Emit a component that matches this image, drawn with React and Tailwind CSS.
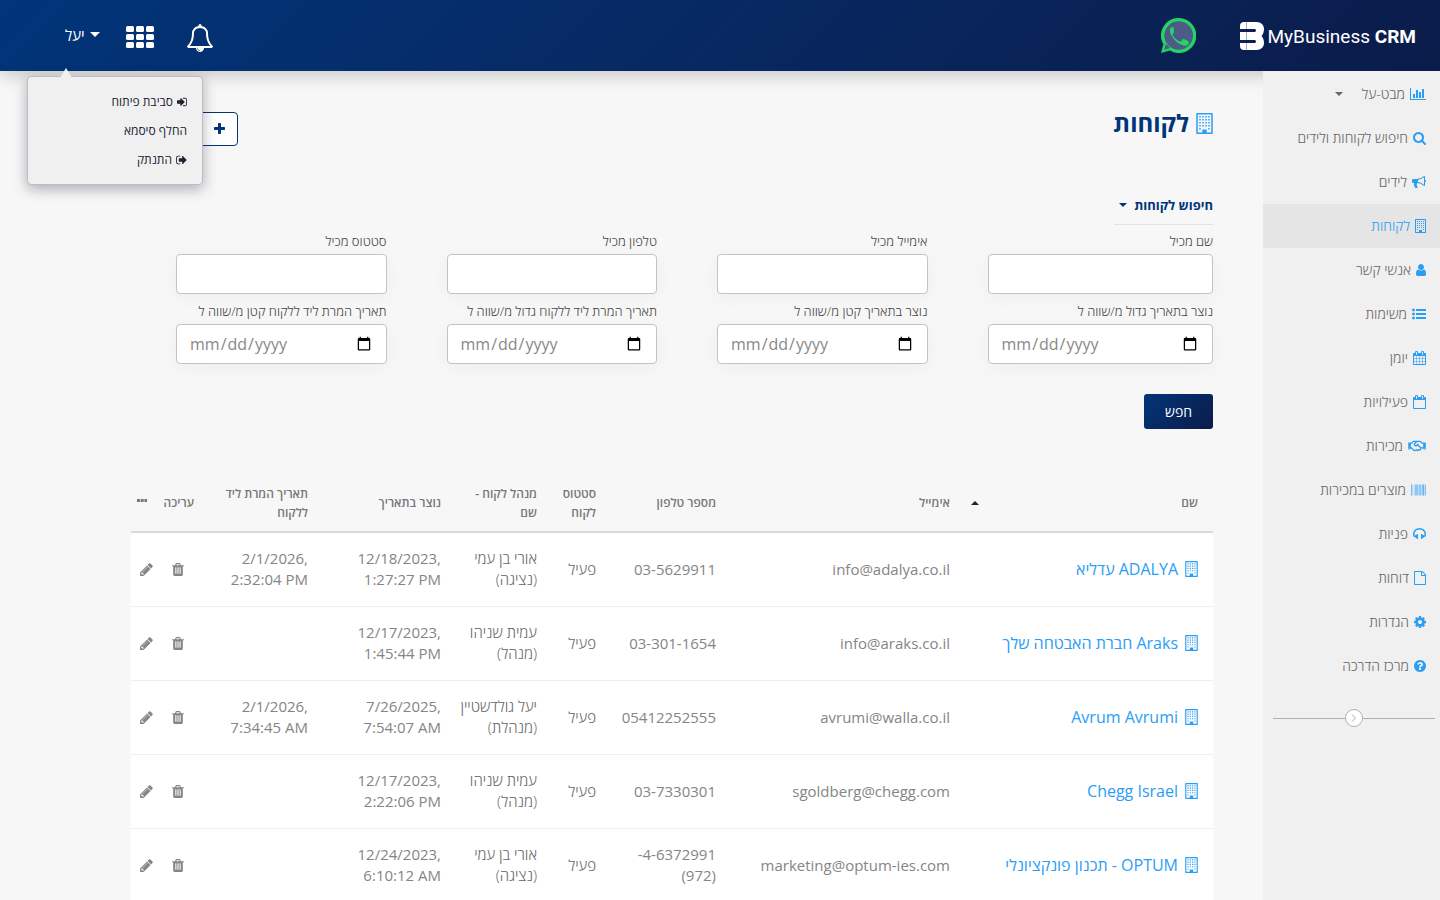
import { FaRegHandshake } from 'react-icons/fa';

const win = (x, y) => `M${x} ${y}h128v128h-128z`;
const buildingWindows = [256, 512, 768, 1024, 1280]
    .flatMap((y) => [256, 512, 768, 1024].filter((x) => y < 1280 || x === 256 || x === 1024).map((x) => win(x, y)))
    .join('');

const bars = [0, 94, 221, 378, 504, 660, 785, 942, 1036, 1162, 1320, 1414, 1540, 1697, 1824];
const barWidths = [63, 32, 31, 31, 62, 63, 62, 31, 63, 63, 31, 63, 94, 31, 63];

// [x offset, width, path] on a 1792 unit em
const icons = {
    chart: [0, 2048, 'M640 896v512h-256v-512h256zm384-512v1024h-256v-1024h256zm1024 1152v128h-2048v-1536h128v1408h1920zm-640-896v768h-256v-768h256zm384-384v1152h-256v-1152h256z'],
    search: [64, 1664, 'M1216 832q0-185-131.5-316.5t-316.5-131.5-316.5 131.5-131.5 316.5 131.5 316.5 316.5 131.5 316.5-131.5 131.5-316.5zm512 832q0 52-38 90t-90 38q-54 0-90-38l-343-342q-179 124-399 124-143 0-273.5-55.5t-225-150-150-225-55.5-273.5 55.5-273.5 150-225 225-150 273.5-55.5 273.5 55.5 225 150 150 225 55.5 273.5q0 220-124 399l343 343q37 37 37 90z'],
    bullhorn: [0, 1792, 'M1664 640q53 0 90.5 37.5t37.5 90.5-37.5 90.5-90.5 37.5v384q0 52-38 90t-90 38q-417-347-812-380-58 19-91 66t-31 100.5 40 92.5q-20 33-23 65.5t6 58 33.5 55 48 50 61.5 50.5q-29 58-111.5 83t-168.5 11.5-132-55.5q-7-23-29.5-87.5t-32-94.5-23-89-15-101 3.5-98 22-110.5h-122q-66 0-113-47t-47-113v-192q0-66 47-113t113-47h480q435 0 896-384 52 0 90 38t38 90v384zm-128 604v-954q-394 302-768 343v270q377 42 768 341z'],
    building: [0, 1408, 'M64 0h1280q26 0 45 19t19 45v1664q0 26-19 45t-45 19h-1280q-26 0-45-19t-19-45v-1664q0-26 19-45t45-19zm832 1664h384v-1536h-1152v1536h384v-224q0-13 9.5-22.5t22.5-9.5h320q13 0 22.5 9.5t9.5 22.5v224z' + buildingWindows],
    user: [256, 1280, 'M1536 1399q0 109-62.5 187t-150.5 78h-854q-88 0-150.5-78t-62.5-187q0-85 8.5-160.5t31.5-152 58.5-131 94-89 134.5-34.5q131 128 313 128t313-128q76 0 134.5 34.5t94 89 58.5 131 31.5 152 8.5 160.5zm-256-887q0 159-112.5 271.5t-271.5 112.5-271.5-112.5-112.5-271.5 112.5-271.5 271.5-112.5 271.5 112.5 112.5 271.5z'],
    list: [0, 1792, 'M384 1408q0 80-56 136t-136 56-136-56-56-136 56-136 136-56 136 56 56 136zm0-512q0 80-56 136t-136 56-136-56-56-136 56-136 136-56 136 56 56 136zm1408 416v192q0 13-9.5 22.5t-22.5 9.5h-1216q-13 0-22.5-9.5t-9.5-22.5v-192q0-13 9.5-22.5t22.5-9.5h1216q13 0 22.5 9.5t9.5 22.5zm-1408-928q0 80-56 136t-136 56-136-56-56-136 56-136 136-56 136 56 56 136zm1408 416v192q0 13-9.5 22.5t-22.5 9.5h-1216q-13 0-22.5-9.5t-9.5-22.5v-192q0-13 9.5-22.5t22.5-9.5h1216q13 0 22.5 9.5t9.5 22.5zm0-512v192q0 13-9.5 22.5t-22.5 9.5h-1216q-13 0-22.5-9.5t-9.5-22.5v-192q0-13 9.5-22.5t22.5-9.5h1216q13 0 22.5 9.5t9.5 22.5z'],
    calendar: [64, 1664, 'M192 1664h288v-288h-288v288zm352 0h320v-288h-320v288zm-352-352h288v-320h-288v320zm352 0h320v-320h-320v320zm-352-384h288v-288h-288v288zm736 736h320v-288h-320v288zm-384-736h320v-288h-320v288zm768 736h288v-288h-288v288zm-384-352h320v-320h-320v320zm-352-864v-288q0-13-9.5-22.5t-22.5-9.5h-64q-13 0-22.5 9.5t-9.5 22.5v288q0 13 9.5 22.5t22.5 9.5h64q13 0 22.5-9.5t9.5-22.5zm736 864h288v-320h-288v320zm-384-384h320v-288h-320v288zm384 0h288v-288h-288v288zm32-480v-288q0-13-9.5-22.5t-22.5-9.5h-64q-13 0-22.5 9.5t-9.5 22.5v288q0 13 9.5 22.5t22.5 9.5h64q13 0 22.5-9.5t9.5-22.5zm384-64v1280q0 52-38 90t-90 38h-1408q-52 0-90-38t-38-90v-1280q0-52 38-90t90-38h128v-96q0-66 47-113t113-47h64q66 0 113 47t47 113v96h384v-96q0-66 47-113t113-47h64q66 0 113 47t47 113v96h128q52 0 90 38t38 90z'],
    calendarEmpty: [64, 1664, 'M192 1664h1408v-1024h-1408v1024zm384-1216v-288q0-13-9.5-22.5t-22.5-9.5h-64q-13 0-22.5 9.5t-9.5 22.5v288q0 13 9.5 22.5t22.5 9.5h64q13 0 22.5-9.5t9.5-22.5zm768 0v-288q0-13-9.5-22.5t-22.5-9.5h-64q-13 0-22.5 9.5t-9.5 22.5v288q0 13 9.5 22.5t22.5 9.5h64q13 0 22.5-9.5t9.5-22.5zm384-64v1280q0 52-38 90t-90 38h-1408q-52 0-90-38t-38-90v-1280q0-52 38-90t90-38h128v-96q0-66 47-113t113-47h64q66 0 113 47t47 113v96h384v-96q0-66 47-113t113-47h64q66 0 113 47t47 113v96h128q52 0 90 38t38 90z'],
    barcode: [0, 1887, bars.map((x, i) => `M${x} 192h${barWidths[i]}v1408h-${barWidths[i]}z`).join('')],
    headphones: [64, 1664, 'M1728 886q0 166-60 314l-20 49-185 33q-22 83-90.5 136.5t-156.5 53.5v32q0 14-9 23t-23 9h-64q-14 0-23-9t-9-23v-576q0-14 9-23t23-9h64q14 0 23 9t9 23v32q71 0 130 35.5t93 95.5l68-12q29-95 29-193 0-148-88-279t-236.5-209-315.5-78-315.5 78-236.5 209-88 279q0 98 29 193l68 12q34-60 93-95.5t130-35.5v-32q0-14 9-23t23-9h64q14 0 23 9t9 23v576q0 14-9 23t-23 9h-64q-14 0-23-9t-9-23v-32q-88 0-156.5-53.5t-90.5-136.5l-185-33-20-49q-60-148-60-314 0-151 67-291t179-242.5 266-163.5 320-61 320 61 266 163.5 179 242.5 67 291z'],
    file: [128, 1536, 'M1596 380q28 28 48 76t20 88v1152q0 40-28 68t-68 28h-1344q-40 0-68-28t-28-68v-1600q0-40 28-68t68-28h896q40 0 88 20t76 48zm-444-244v376h376q-10-29-22-41l-313-313q-12-12-41-22zm384 1528v-1024h-416q-40 0-68-28t-28-68v-416h-768v1536h1280z'],
    cog: [128, 1536, 'M1152 896q0-106-75-181t-181-75-181 75-75 181 75 181 181 75 181-75 75-181zm512-109v222q0 12-8 23t-20 13l-185 28q-19 54-39 91 35 50 107 138 10 12 10 25t-9 23q-27 37-99 108t-94 71q-12 0-26-9l-138-108q-44 23-91 38-16 136-29 186-7 28-36 28h-222q-14 0-24.5-8.5t-11.5-21.5l-28-184q-49-16-90-37l-141 107q-10 9-25 9-14 0-25-11-126-114-165-168-7-10-7-23 0-12 8-23 15-21 51-66.5t54-70.5q-27-50-41-99l-183-27q-13-2-21-12.5t-8-23.5v-222q0-12 8-23t19-13l186-28q14-46 39-92-40-57-107-138-10-12-10-24 0-10 9-23 26-36 98.5-107.5t94.5-71.5q13 0 26 10l138 107q44-23 91-38 16-136 29-186 7-28 36-28h222q14 0 24.5 8.5t11.5 21.5l28 184q49 16 90 37l142-107q9-9 24-9 13 0 25 10 129 119 165 170 7 8 7 22 0 12-8 23-15 21-51 66.5t-54 70.5q26 50 41 98l183 28q13 2 21 12.5t8 23.5z'],
    question: [128, 1536, 'M1024 1376v-192q0-14-9-23t-23-9h-192q-14 0-23 9t-9 23v192q0 14 9 23t23 9h192q14 0 23-9t9-23zm256-672q0-88-55.5-163t-138.5-116-170-41q-243 0-371 213-15 24 8 42l132 100q7 6 19 6 16 0 25-12 53-68 86-92 34-24 86-24 48 0 85.5 26t37.5 59q0 38-20 61t-68 45q-63 28-115.5 86.5t-52.5 125.5v36q0 14 9 23t23 9h192q14 0 23-9t9-23q0-19 21.5-49.5t54.5-49.5q32-18 49-28.5t46-35 44.5-48 28-60.5 12.5-81zm384 192q0 209-103 385.5t-279.5 279.5-385.5 103-385.5-103-279.5-279.5-103-385.5 103-385.5 279.5-279.5 385.5-103 385.5 103 279.5 279.5 103 385.5z'],
    trash: [192, 1408, 'M704 1376v-704q0-14-9-23t-23-9h-64q-14 0-23 9t-9 23v704q0 14 9 23t23 9h64q14 0 23-9t9-23zm256 0v-704q0-14-9-23t-23-9h-64q-14 0-23 9t-9 23v704q0 14 9 23t23 9h64q14 0 23-9t9-23zm256 0v-704q0-14-9-23t-23-9h-64q-14 0-23 9t-9 23v704q0 14 9 23t23 9h64q14 0 23-9t9-23zm-544-992h448l-48-117q-7-9-17-11h-317q-10 2-17 11zm928 32v64q0 14-9 23t-23 9h-96v948q0 83-47 143.5t-113 60.5h-832q-66 0-113-58.5t-47-141.5v-952h-96q-14 0-23-9t-9-23v-64q0-14 9-23t23-9h309l70-167q15-37 54-63t79-26h320q40 0 79 26t54 63l70 167h309q14 0 23 9t9 23z'],
    pencil: [128, 1536, 'M491 1536l91-91-235-235-91 91v107h128v128h107zm523-928q0-22-22-22-10 0-17 7l-542 542q-7 7-7 17 0 22 22 22 10 0 17-7l542-542q7-7 7-17zm-54-192l416 416-832 832h-416v-416zm683 96q0 53-37 90l-166 166-416-416 166-165q36-38 90-38 53 0 91 38l235 234q37 39 37 91z'],
    plus: [192, 1408, 'M1600 736v192q0 40-28 68t-68 28h-416v416q0 40-28 68t-68 28h-192q-40 0-68-28t-28-68v-416h-416q-40 0-68-28t-28-68v-192q0-40 28-68t68-28h416v-416q0-40 28-68t68-28h192q40 0 68 28t28 68v416h416q40 0 68 28t28 68z'],
    signIn: [128, 1536, 'M1312 896q0 26-19 45l-544 544q-19 19-45 19t-45-19-19-45v-288h-448q-26 0-45-19t-19-45v-384q0-26 19-45t45-19h448v-288q0-26 19-45t45-19 45 19l544 544q19 19 19 45zm352-352v704q0 119-84.5 203.5t-203.5 84.5h-320q-13 0-22.5-9.5t-9.5-22.5q0-4-1-20t-.5-26.5 3-23.5 10-19.5 20.5-6.5h320q66 0 113-47t47-113v-704q0-66-47-113t-113-47h-312l-11.5-1-11.5-3-8-5.5-7-9-2-13.5q0-4-1-20t-.5-26.5 3-23.5 10-19.5 20.5-6.5h320q119 0 203.5 84.5t84.5 203.5z'],
    signOut: [64, 1600, 'M704 1440q0 4 1 20t.5 26.5-3 23.5-10 19.5-20.5 6.5h-320q-119 0-203.5-84.5t-84.5-203.5v-704q0-119 84.5-203.5t203.5-84.5h320q13 0 22.5 9.5t9.5 22.5q0 4 1 20t.5 26.5-3 23.5-10 19.5-20.5 6.5h-320q-66 0-113 47t-47 113v704q0 66 47 113t113 47h312l11.5 1 11.5 3 8 5.5 7 9 2 13.5zm928-544q0 26-19 45l-544 544q-19 19-45 19t-45-19-19-45v-288h-448q-26 0-45-19t-19-45v-384q0-26 19-45t45-19h448v-288q0-26 19-45t45-19 45 19l544 544q19 19 19 45z'],
    bell: [64, 1664, 'M912 1696q0-16-16-16-59 0-101.5-42.5t-42.5-101.5q0-16-16-16t-16 16q0 73 51.5 124.5t124.5 51.5q16 0 16-16zm-666-288h1300q-266-300-266-832 0-51-24-105t-69-103-121.5-80.5-169.5-31.5-169.5 31.5-121.5 80.5-69 103-24 105q0 532 -266 832zm1482 0q0 52-38 90t-90 38h-448q0 106-75 181t-181 75-181-75-75-181h-448q-52 0-90-38t-38-90q50-42 91-88t85-119.5 74.5-158.5 50-206 19.5-260q0-152 117-282.5t307-158.5q-8-19-8-39 0-40 28-68t68-28 68 28 28 68q0 20-8 39 190 28 307 158.5t117 282.5q0 139 19.5 260t50 206 74.5 158.5 85 119.5 91 88z'],
};

function Icon({ name, size = 14, className = '' }) {
    const [x, width, path] = icons[name];
    return (
        <svg
            className={`shrink-0 ${className}`}
            width={Math.round((width / 1792) * size)}
            height={size}
            viewBox={`${x} 0 ${width} 1792`}
            fill="currentColor"
            fillRule="evenodd"
            aria-hidden="true"
        >
            <path d={path} />
        </svg>
    );
}

function Caret({ className = '', up = false }) {
    return (
        <svg className={className} viewBox="0 0 8 4" fill="currentColor" aria-hidden="true">
            <path d={up ? 'M0 4L4 0L8 4z' : 'M0 0h8L4 4z'} />
        </svg>
    );
}

function Logo() {
    return (
        <a href="#" dir="ltr" className="flex items-center gap-1 text-white">
            <svg width="24" height="28" viewBox="0 0 24 28" fill="none" aria-hidden="true">
                <path d="M4 0h12.500c4.500 0 7.500 3 7.500 7 0 3-1 5.500-2.500 7 1.500 1.500 2.500 4 2.500 7 0 4-3 7-7.500 7H4c-2.500 0-4-1.500-4-4V4c0-2.500 1.500-4 4-4z" fill="#fff" />
                <path d="M0 8.500h14M0 19.500h14" stroke="#0a2050" strokeWidth="3" />
                <path d="M14 7c1.500 0 2 .7 2 1.500s-.5 1.500-2 1.500zM14 18c1.500 0 2 .7 2 1.500s-.5 1.500-2 1.500z" fill="#0a2050" />
                <path d="M6.500 0v28" stroke="#0a2050" strokeOpacity=".35" />
            </svg>
            <span className="pt-[2px] font-[Roboto] text-[19px] leading-7 whitespace-nowrap">
                MyBusiness <b className="font-bold">CRM</b>
            </span>
        </a>
    );
}

const userMenu = [
    { label: 'סביבת פיתוח', icon: 'signIn' },
    { label: 'החלף סיסמא' },
    { label: 'התנתק', icon: 'signOut' },
];

function Header() {
    return (
        <header className="relative z-10 flex h-[71px] items-center justify-between bg-linear-135 from-[#00357a] to-[#0a1c4a] ps-6 pe-[65px] shadow-[0_4px_16px_rgba(0,0,0,0.2)]">
            <div className="flex items-center gap-11">
                <Logo />
                <a href="#" aria-label="WhatsApp">
                    <svg width="35" height="35" viewBox="0 0 35 35" aria-hidden="true">
                        <path d="M17.500 0A17.500 17.500 0 0 0 2.400 26.300L0 35l9-2.400A17.500 17.500 0 1 0 17.500 0z" fill="#25d366" />
                        <circle cx="17.700" cy="17.500" r="14.300" fill="#4c5c86" />
                        <path d="M3.300 31.700l1.600-5.900 4.300 4.200z" fill="#4c5c86" />
                        <path d="M12.700 9.700c-.4-.9-.8-.8-1.200-.8-1 0-2.700 1-2.700 3.800 0 2.700 2 5.300 2.300 5.700.3.400 3.900 6.200 9.600 8.400 4.700 1.900 5.700.7 6.700-.9.500-.9.500-2.100.3-2.400-.2-.3-.6-.5-1.200-.8l-3.600-1.700c-.5-.2-.9-.3-1.200.3l-1.700 2.100c-.3.400-.6.400-1.100.1-.6-.3-2.300-.9-4.300-2.700-1.600-1.500-2.700-3.200-3-3.800-.3-.6 0-.8.300-1.100.9-1 1.300-1.700 1.100-2.300z" fill="#25d366" />
                    </svg>
                </a>
            </div>

            <div className="flex items-center text-white">
                <button type="button" aria-label="התראות" className="me-[33px] pt-1">
                    <Icon name="bell" size={28} />
                </button>
                <button type="button" aria-label="אפליקציות" className="me-[26px] pt-[2px]">
                    <svg width="28" height="22" viewBox="0 0 28 22" fill="currentColor" aria-hidden="true">
                        {[0, 8, 16].map((y) => [0, 10, 20].map((x) => <rect key={`${x}-${y}`} x={x} y={y} width="8" height="6" rx="1.500" />))}
                    </svg>
                </button>
                <button type="button" className="flex items-center gap-[5px] pb-[2px] text-[15px] leading-5">
                    <Caret className="h-[5px] w-[10px]" />
                    יעל
                </button>
            </div>

            {/* תפריט משתמש */}
            <nav className="absolute top-[76px] left-[27px] w-44 rounded border border-[#bdbdc2] bg-[#f0f0f0] px-[15px] pt-[10px] pb-[10px] text-[12px] leading-[29px] text-[#212132] shadow-[0_4px_14px_rgba(30,30,60,0.35)]">
                <svg className="absolute -top-[9px] left-8" width="12" height="10" viewBox="0 0 12 10" aria-hidden="true">
                    <path d="M0 10L6 0l6 10z" fill="#f0f0f0" />
                </svg>
                {userMenu.map((item) => (
                    <a key={item.label} href="#" className="flex items-center gap-1">
                        {item.icon && <Icon name={item.icon} size={12} />}
                        {item.label}
                    </a>
                ))}
            </nav>
        </header>
    );
}

const navItems = [
    { label: 'מבט-על', icon: 'chart', caret: true },
    { label: 'חיפוש לקוחות ולידים', icon: 'search' },
    { label: 'לידים', icon: 'bullhorn' },
    { label: 'לקוחות', icon: 'building', active: true },
    { label: 'אנשי קשר', icon: 'user' },
    { label: 'משימות', icon: 'list' },
    { label: 'יומן', icon: 'calendar' },
    { label: 'פעילויות', icon: 'calendarEmpty' },
    { label: 'מכירות', icon: 'handshake' },
    { label: 'מוצרים במכירות', icon: 'barcode' },
    { label: 'פניות', icon: 'headphones' },
    { label: 'דוחות', icon: 'file' },
    { label: 'הגדרות', icon: 'cog' },
    { label: 'מרכז הדרכה', icon: 'question' },
];

function Sidebar() {
    return (
        <aside className="relative z-20 w-[177px] shrink-0 bg-[#f0f0f0] pt-px">
            <nav>
                {navItems.map((item) => (
                    <a
                        key={item.label}
                        href="#"
                        className={`flex h-11 items-center gap-[5px] ps-[14px] text-[14px] font-light ${item.active ? 'bg-[#e5e5e5] text-[#2a9df4]' : 'text-[#666]'}`}
                    >
                        {item.icon === 'handshake'
                            ? <FaRegHandshake className="h-[14px] w-[18px] text-[#2a9df4]" />
                            : <Icon name={item.icon} className="text-[#2a9df4]" />}
                        <span className="pb-[2px]">{item.label}</span>
                        {item.caret && <Caret className="ms-[14px] h-1 w-2" />}
                    </a>
                ))}
            </nav>
            <div className="ms-[5px] me-[10px] mt-[21px] flex items-center">
                <span className="h-px flex-1 bg-[#b0b0aa]" />
                <button type="button" aria-label="כווץ תפריט" className="flex size-[18px] items-center justify-center rounded-full border border-[#b0b0aa] bg-white">
                    <svg width="6" height="8" viewBox="0 0 6 8" fill="none" stroke="#aaa" aria-hidden="true">
                        <path d="M1 .5L4.500 4L1 7.500" />
                    </svg>
                </button>
                <span className="h-px flex-1 bg-[#b0b0aa]" />
            </div>
        </aside>
    );
}

const fields = [
    { id: 'name', label: 'שם מכיל' },
    { id: 'email', label: 'אימייל מכיל' },
    { id: 'phone', label: 'טלפון מכיל' },
    { id: 'status', label: 'סטטוס מכיל' },
    { id: 'created-from', label: 'נוצר בתאריך גדול מ/שווה ל', date: true },
    { id: 'created-to', label: 'נוצר בתאריך קטן מ/שווה ל', date: true },
    { id: 'converted-from', label: 'תאריך המרת ליד ללקוח גדול מ/שווה ל', date: true },
    { id: 'converted-to', label: 'תאריך המרת ליד ללקוח קטן מ/שווה ל', date: true },
];

function SearchForm() {
    return (
        <form>
            <button type="button" className="flex items-center gap-[7px] border-b border-[#e2e2e2] pe-[5px] pb-[9px] text-[13px] leading-5 font-bold text-[#00357a]">
                חיפוש לקוחות
                <Caret className="h-1 w-2" />
            </button>
            <div className="grid grid-cols-4 pt-[6px]">
                {fields.map((field, i) => (
                    <div key={field.id} className={`pe-[45px] ${i % 4 === 0 ? '' : 'ps-[15px]'}`}>
                        <label htmlFor={field.id} className="block h-[23px] text-[13px] leading-5 font-light whitespace-nowrap text-[#444]">{field.label}</label>
                        <input
                            id={field.id}
                            type={field.date ? 'date' : 'text'}
                            dir={field.date ? 'ltr' : 'rtl'}
                            className="mb-[7px] block h-10 w-full rounded border border-[#c3c3c3] bg-white px-3 text-[16px] text-[#888] shadow-[0_4px_20px_rgba(0,0,0,0.04)]"
                        />
                    </div>
                ))}
            </div>
            <button type="submit" className="mt-[23px] h-[35px] w-[69px] rounded-[3px] bg-linear-135 from-[#00357a] to-[#0a1c4a] text-[14px] text-white">
                חפש
            </button>
        </form>
    );
}

const customers = [
    { name: 'ADALYA עדליא', email: 'info@adalya.co.il', phone: '03-5629911', owner: 'אורי בן עמי (נציגה)', created: '12/18/2023, 1:27:27 PM', converted: '2/1/2026, 2:32:04 PM' },
    { name: 'Araks חברת האבטחה שלך', email: 'info@araks.co.il', phone: '03-301-1654', owner: 'עמית שניהו (מנהל)', created: '12/17/2023, 1:45:44 PM', converted: '' },
    { name: 'Avrum Avrumi', email: 'avrumi@walla.co.il', phone: '05412252555', owner: 'יעל גולדשטיין (מנהלת)', created: '7/26/2025, 7:54:07 AM', converted: '2/1/2026, 7:34:45 AM' },
    { name: 'Chegg Israel', email: 'sgoldberg@chegg.com', phone: '03-7330301', owner: 'עמית שניהו (מנהל)', created: '12/17/2023, 2:22:06 PM', converted: '' },
    { name: 'OPTUM - תכנון פונקציונלי', email: 'marketing@optum-ies.com', phone: '4-6372991-(972)', owner: 'אורי בן עמי (נציגה)', created: '12/24/2023, 6:10:12 AM', converted: '' },
];

function CustomersTable() {
    return (
        <table className="mt-[41px] w-full table-fixed text-[15px] leading-[21px] text-[#858585]">
            <thead className="text-[12px] leading-[19px] text-[#777]">
                <tr className="h-[62px] border-b-2 border-[#dadada] [&>th]:ps-[15px] [&>th]:pt-1 [&>th]:text-start [&>th]:font-semibold">
                    <th>
                        <div className="flex items-center justify-between">
                            שם
                            <Caret up className="me-[6px] h-1 w-2 text-[#222]" />
                        </div>
                    </th>
                    <th className="w-[234px]">אימייל</th>
                    <th className="w-[120px]">מספר טלפון</th>
                    <th className="w-[59px]">סטטוס לקוח</th>
                    <th className="w-24">מנהל לקוח - שם</th>
                    <th className="w-[133px]">נוצר בתאריך</th>
                    <th className="w-[114px]">תאריך המרת ליד ללקוח</th>
                    <th className="w-[47px]">עריכה</th>
                    <th className="w-[31px]">
                        <svg className="mb-1" width="10" height="3" viewBox="0 0 10 3" fill="currentColor" aria-hidden="true">
                            <path d="M0 0h3v3H0zM3.700 0h3v3h-3zM7.400 0H10v3H7.400z" />
                        </svg>
                    </th>
                </tr>
            </thead>
            <tbody className="bg-white">
                {customers.map((c) => (
                    <tr key={c.name} className="h-[74px] border-b border-[#eee] [&>td]:ps-[15px]">
                        <td>
                            <a href="#" className="flex items-center gap-[7px] text-[16px] text-[#2a9df4]">
                                <Icon name="building" size={16} />
                                {c.name}
                            </a>
                        </td>
                        <td>{c.email}</td>
                        <td>{c.phone}</td>
                        <td className="font-light text-[#666]">פעיל</td>
                        <td className="font-light text-[#666]">{c.owner}</td>
                        <td><div dir="ltr" className="text-right">{c.created}</div></td>
                        <td><div dir="ltr" className="text-right">{c.converted}</div></td>
                        <td>
                            <button type="button" aria-label="מחק" className="mx-auto block"><Icon name="trash" size={15} /></button>
                        </td>
                        <td className="!ps-0">
                            <button type="button" aria-label="ערוך" className="mx-auto block"><Icon name="pencil" size={15} /></button>
                        </td>
                    </tr>
                ))}
            </tbody>
        </table>
    );
}

export default function App() {
    return (
        <div dir="rtl" className="flex min-h-screen flex-col bg-[#f7f7f7] font-['Open_Sans',sans-serif]">
            <Header />
            <div className="flex flex-1">
                <Sidebar />
                <main className="min-w-0 flex-1 ps-[50px] pe-[131px] pt-[34px]">
                    <div className="mb-[49px] flex items-start justify-between">
                        <h1 className="flex items-center gap-[7px] text-[24px] leading-9 font-bold text-[#00357a]">
                            <Icon name="building" size={21} className="text-[#2a9df4]" />
                            לקוחות
                        </h1>
                        <button type="button" aria-label="הוסף לקוח" className="mt-[7px] flex h-[34px] w-[107px] items-center rounded border border-[#00357a] bg-white ps-3 text-[#00357a]">
                            <Icon name="plus" />
                        </button>
                    </div>
                    <SearchForm />
                    <CustomersTable />
                </main>
            </div>
        </div>
    );
}
